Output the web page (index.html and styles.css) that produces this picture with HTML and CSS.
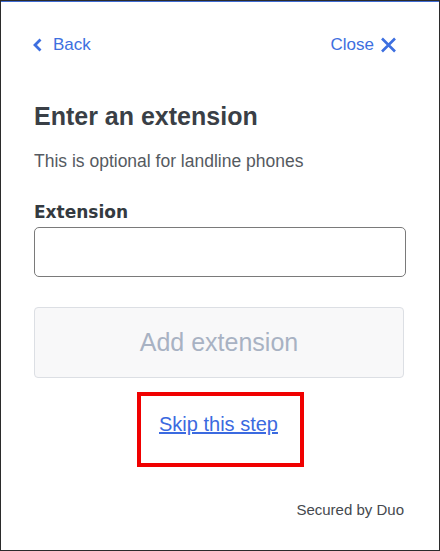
FILE: index.html
```html
<!DOCTYPE html>
<html lang="en">
<head>
    <meta charset="UTF-8">
    <meta name="viewport" content="width=device-width, initial-scale=1.0">
    <title>Enter an extension</title>
    <link rel="stylesheet" href="styles.css">
</head>
<body>

    <div class="frame">
        <div class="nav">
            <a class="nav-link" href="#">
                <svg class="chevron" width="9" height="14" viewBox="0 0 9 14">
                    <path d="M7.5 1.5 L2 7 L7.5 12.5" fill="none" stroke="currentColor" stroke-width="2.8"/>
                </svg>
                Back
            </a>
            <a class="nav-link close-link" href="#">
                Close
                <svg class="cross" width="17" height="16" viewBox="0 0 17 16">
                    <path d="M2 1.5 L15 14.5 M15 1.5 L2 14.5" fill="none" stroke="currentColor" stroke-width="2.6"/>
                </svg>
            </a>
        </div>

        <h1 class="title">Enter an extension</h1>
        <p class="hint">This is optional for landline phones</p>

        <label class="field-label" for="extension">Extension</label>
        <input class="field" type="text" id="extension">

        <button class="submit" disabled>Add extension</button>

        <div class="skip-row">
            <div class="highlight">
                <a class="skip" href="#">Skip this step</a>
            </div>
        </div>

        <div class="footer">Secured by Duo</div>
    </div>

</body>
</html>
```

FILE: styles.css
```css
body {
    margin: 0;
    padding: 0;
    font-family: 'Liberation Sans', Arial, sans-serif;
    background: #fff;
}

.frame {
    box-sizing: border-box;
    height: 551px;
    border: 1px solid #2b2b2b;
    box-shadow: inset 0 1px 0 #3f6bd2;
    padding: 31px 33px 0 33px;
}

.nav {
    display: flex;
    justify-content: space-between;
    align-items: center;
    height: 25px;
}

.nav-link {
    display: flex;
    align-items: center;
    color: #3d6fe0;
    font-size: 17px;
    text-decoration: none;
}

.chevron {
    margin-left: -1px;
    margin-right: 11px;
}

.cross {
    margin-left: 6px;
    margin-right: 9px;
}

.title {
    margin: 44px 0 0 0;
    font-size: 25px;
    line-height: 30px;
    font-weight: bold;
    color: #3a3f46;
}

.hint {
    margin: 18px 0 0 0;
    font-size: 17.5px;
    line-height: 24px;
    color: #555a61;
}

.field-label {
    display: block;
    margin-top: 28px;
    font-family: 'DejaVu Sans', sans-serif;
    font-weight: bold;
    font-size: 17px;
    line-height: 22px;
    color: #343a40;
}

.field {
    display: block;
    box-sizing: border-box;
    width: 100%;
    height: 50px;
    margin-top: 4px;
    border: 1px solid #7a7a7a;
    border-radius: 5px;
    font-size: 18px;
    padding: 0 12px;
}

.submit {
    display: block;
    box-sizing: border-box;
    width: calc(100% - 2px);
    height: 71px;
    margin-top: 30px;
    background-color: #f8f8f9;
    border: 1px solid #dcdfe4;
    border-radius: 4px;
    color: #a8b2c3;
    font-family: 'Liberation Sans', Arial, sans-serif;
    font-size: 25px;
}

.skip-row {
    display: flex;
    justify-content: center;
    margin-top: 14px;
}

.highlight {
    box-sizing: border-box;
    width: 167px;
    height: 75px;
    border: 4px solid #f00000;
    padding: 16px 3px 0 0;
    text-align: center;
}

.skip {
    font-size: 20px;
    line-height: 24px;
    color: #3b6ae0;
    text-decoration: underline;
}

.footer {
    margin-top: 34px;
    text-align: right;
    font-size: 15px;
    line-height: 18px;
    color: #45494e;
    padding-right: 2px;
}
```
